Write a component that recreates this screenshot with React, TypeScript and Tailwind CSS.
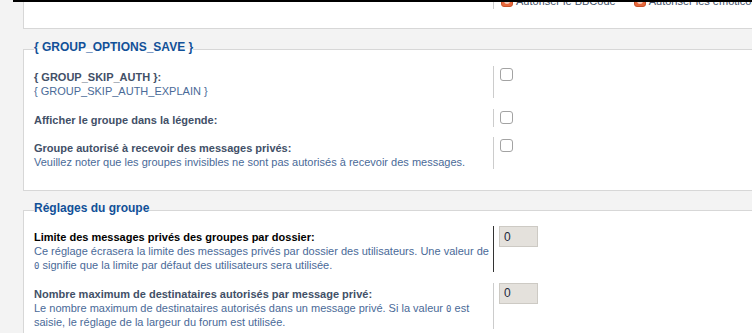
import React from "react";

const explainCls = "block text-[11px] leading-[14px] text-[#4a6a98]";
const codeCls = "font-['DejaVu_Sans_Mono',monospace] text-[9px] leading-[10px]";

function Checkbox() {
  return <span className="mt-[2px] block w-[13px] h-[13px] rounded-[3px] border border-[#a3a3a3] bg-white" />;
}

function NumInput() {
  return (
    <input
      readOnly
      value="0"
      className="block w-[39px] h-[21px] bg-[#e4e1dc] border border-[#cdcac4] pl-[4px] text-[12px] leading-[19px] text-[#1e2a3d] font-['Liberation_Sans',Arial,sans-serif] outline-none"
    />
  );
}

function Row({
  label,
  explain,
  control,
  hover = false,
  input = false,
}: {
  label: React.ReactNode;
  explain?: React.ReactNode;
  control: React.ReactNode;
  hover?: boolean;
  input?: boolean;
}) {
  return (
    <div className="flex">
      <div className="w-[459px] shrink-0 pt-[4px] pr-[4px]">
        <span
          className={
            hover
              ? "block font-bold text-[11px] leading-[14px] text-black"
              : "block font-bold text-[11px] leading-[14px] text-[#425067]"
          }
        >
          {label}
        </span>
        {explain && <span className={explainCls}>{explain}</span>}
      </div>
      <div
        className={
          "border-l " +
          (hover ? "border-[#333333] " : "border-[#cccccc] ") +
          (input ? "pl-[5px]" : "pl-[6px]")
        }
      >
        {control}
      </div>
    </div>
  );
}

function OrangeBox() {
  return (
    <span className="relative block w-[12px] h-[12px] rounded-[3px] bg-[#e8693d] border border-[#c9532a]">
      <span className="absolute left-[2px] top-[2px] w-[6px] h-[6px] rounded-full bg-[#f6d2c2]" />
    </span>
  );
}

export default function App() {
  return (
    <div className="w-[752px] h-[333px] overflow-hidden bg-[#f3f3f3] font-['Liberation_Sans',Arial,sans-serif]">
      <div className="ml-[13px] h-[2px] bg-black" />
      {/* tail of previous fieldset */}
      <div className="ml-[23px] w-[760px] h-[27px] bg-white border-l border-b border-[#d7d7d7] overflow-hidden">
        <div className="-mt-[9px] flex">
          <div className="w-[469px] shrink-0" />
          <div className="h-[16px] border-l border-[#cccccc] pl-[7px] flex items-center gap-[3px] text-[11px] leading-[14px] text-[#425067]">
            <OrangeBox />
            <span className="mr-[15px]">Autoriser le BBCode</span>
            <OrangeBox />
            <span>Autoriser les émoticônes</span>
          </div>
        </div>
      </div>

      <fieldset className="ml-[23px] mt-[12px] w-[760px] bg-white border border-[#d7d7d7] pl-[10px] pt-[9px] pb-[21px]">
        <legend className="text-[12px] leading-[12px] pb-[4px] font-bold text-[#115098]">
          {"{ GROUP_OPTIONS_SAVE }"}
        </legend>
        <div className="flex flex-col gap-[10.5px]">
          <Row
            label="{ GROUP_SKIP_AUTH }:"
            explain="{ GROUP_SKIP_AUTH_EXPLAIN }"
            control={<Checkbox />}
          />
          <Row label="Afficher le groupe dans la légende:" control={<Checkbox />} />
          <Row
            label="Groupe autorisé à recevoir des messages privés:"
            explain="Veuillez noter que les groupes invisibles ne sont pas autorisés à recevoir des messages."
            control={<Checkbox />}
          />
        </div>
      </fieldset>

      <fieldset className="ml-[23px] mt-[11px] w-[760px] bg-white border border-[#d7d7d7] pl-[10px] pt-[8px] pb-[20px]">
        <legend className="text-[12px] leading-[12px] pb-[4px] font-bold text-[#115098]">
          Réglages du groupe
        </legend>
        <div className="flex flex-col gap-[10.5px]">
          <Row
            hover
            input
            control={<NumInput />}
            label="Limite des messages privés des groupes par dossier:"
            explain={
              <>
                Ce réglage écrasera la limite des messages privés par dossier des utilisateurs. Une valeur de{" "}
                <code className={codeCls}>0</code> signifie que la limite par défaut des utilisateurs sera utilisée.
              </>
            }
          />
          <Row
            input
            control={<NumInput />}
            label="Nombre maximum de destinataires autorisés par message privé:"
            explain={
              <>
                Le nombre maximum de destinataires autorisés dans un message privé. Si la valeur{" "}
                <code className={codeCls}>0</code> est saisie, le réglage de la largeur du forum est utilisée.
              </>
            }
          />
        </div>
      </fieldset>
    </div>
  );
}
